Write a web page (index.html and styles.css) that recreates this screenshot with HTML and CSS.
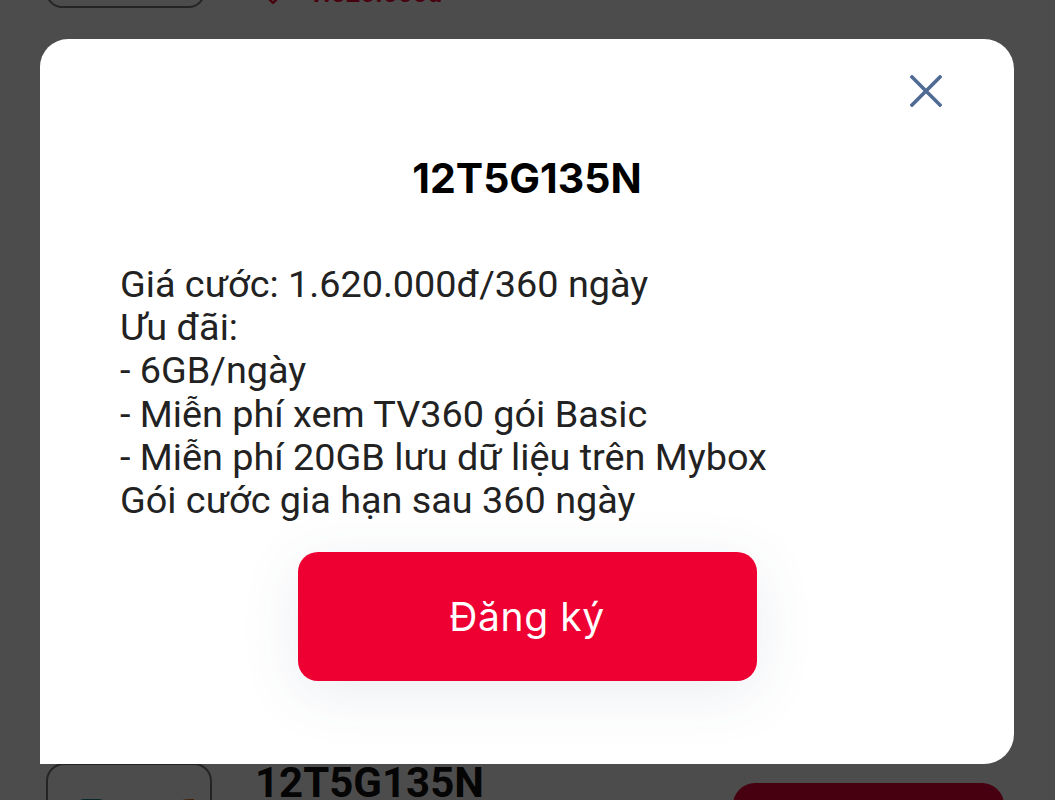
FILE: index.html
```html
<!DOCTYPE html>
<html lang="vi">
<head>
<meta charset="utf-8">
<title>12T5G135N</title>
<link rel="stylesheet" href="styles.css">
</head>
<body>
<main class="page">
  <ul class="list">
    <li class="item item-first">
      <div class="thumb thumb-small"></div>
      <div class="info info-bottom">
        <div class="price-row">
          <svg class="tag" width="22" height="22" viewBox="0 0 22 22" aria-hidden="true">
            <path d="M2 10 L11 1 L20 1 L20 10 L11 19 Z" fill="none" stroke="#ee0033" stroke-width="2.4" stroke-linejoin="round"/>
          </svg>
          <span class="price">1.620.000đ</span>
        </div>
      </div>
    </li>
    <li class="item">
      <div class="thumb">
        <svg class="logo" width="130" height="60" viewBox="0 0 130 60" aria-hidden="true">
          <path d="M10 30 L10 10 Q10 4 16 4 L30 4 Q42 4 42 20 L42 30" fill="#1e8a86"/>
          <path d="M100 30 Q100 4 122 4 L126 4 L126 14 Q112 14 112 30 Z" fill="#e07a1a"/>
        </svg>
      </div>
      <div class="info">
        <h2 class="item-title">12T5G135N</h2>
      </div>
      <button class="item-btn" type="button">Đăng ký</button>
    </li>
  </ul>
</main>

<div class="overlay"></div>

<section class="modal" role="dialog" aria-labelledby="modal-title">
  <button class="close" type="button" aria-label="Đóng">
    <svg width="32" height="32" viewBox="0 0 32 32" aria-hidden="true">
      <path d="M2 2 L30 30 M30 2 L2 30" stroke="#4f6b94" stroke-width="3.6" stroke-linecap="square"/>
    </svg>
  </button>
  <h1 id="modal-title" class="modal-title">12T5G135N</h1>
  <div class="desc">
    <p>Giá cước: 1.620.000đ/360 ngày</p>
    <p>Ưu đãi:</p>
    <p>- 6GB/ngày</p>
    <p>- Miễn phí xem TV360 gói Basic</p>
    <p>- Miễn phí 20GB lưu dữ liệu trên Mybox</p>
    <p>Gói cước gia hạn sau 360 ngày</p>
  </div>
  <div class="actions">
    <button class="primary" type="button">Đăng ký</button>
  </div>
</section>
</body>
</html>
```

FILE: styles.css
```css
* { box-sizing: border-box; }

html, body {
  margin: 0;
  padding: 0;
  height: 100%;
  overflow: hidden;
}

body {
  background: #ffffff;
  font-family: Roboto, "Noto Sans", sans-serif;
  color: #1a1a1a;
}

.page {
  width: 100%;
  height: 100%;
  overflow: hidden;
}

.list {
  list-style: none;
  margin: -162px 0 0;
  padding: 0;
  display: flex;
  flex-direction: column;
  gap: 755px;
}

.item {
  display: flex;
  align-items: flex-start;
  padding-left: 46px;
  padding-right: 51px;
  gap: 43px;
}

.thumb {
  width: 166px;
  height: 170px;
  border: 2px solid #7a7a7a;
  border-radius: 18px;
  flex: none;
  padding: 30px 0 0 20px;
}

.thumb-small {
  width: 159px;
  border-radius: 16px;
}

.info {
  display: flex;
  flex-direction: column;
}

.info-bottom {
  height: 170px;
  justify-content: flex-end;
  padding-bottom: 2px;
  margin-left: 14px;
}

.price-row {
  display: flex;
  align-items: flex-end;
  gap: 24px;
}

.tag { display: block; }

.price {
  color: #ee0033;
  font-weight: 700;
  font-size: 26px;
  line-height: 26px;
}

.item-title {
  margin: 0;
  margin-top: -1px;
  font-family: Roboto, sans-serif;
  font-weight: 700;
  font-size: 42px;
  line-height: 42px;
  color: #111;
}

.item-btn {
  margin-left: auto;
  margin-top: 20px;
  width: 271px;
  height: 80px;
  border: none;
  border-radius: 22px;
  background: #ee0033;
  color: #fff;
  font-size: 28px;
}

.overlay {
  position: fixed;
  inset: 0;
  background: rgba(0, 0, 0, 0.7);
}

.modal {
  position: fixed;
  left: 40px;
  top: 39px;
  width: 974px;
  height: 725px;
  background: #ffffff;
  border-radius: 28px 30px 30px 0;
  padding: 114px 80px 0;
  display: flex;
  flex-direction: column;
}

.close {
  position: absolute;
  top: 36px;
  right: 72px;
  width: 32px;
  height: 32px;
  padding: 0;
  border: none;
  background: transparent;
  display: flex;
}

.modal-title {
  margin: 0;
  text-align: center;
  font-family: Inter, sans-serif;
  font-weight: 700;
  font-size: 41px;
  line-height: 50px;
  color: #000;
}

.desc {
  margin-top: 60px;
  font-family: Roboto, sans-serif;
  font-size: 37.8px;
  line-height: 43.2px;
  color: #222;
}

.desc p { margin: 0; white-space: nowrap; }

.actions {
  margin-top: 30px;
  display: flex;
  justify-content: center;
}

.primary {
  width: 459px;
  height: 129px;
  border: none;
  border-radius: 20px;
  background: #ee0033;
  color: #fff;
  font-family: Inter, sans-serif;
  font-size: 39px;
  font-weight: 400;
  letter-spacing: 0.6px;
  box-shadow: 0 12px 60px rgba(60, 80, 120, 0.10);
}
```
